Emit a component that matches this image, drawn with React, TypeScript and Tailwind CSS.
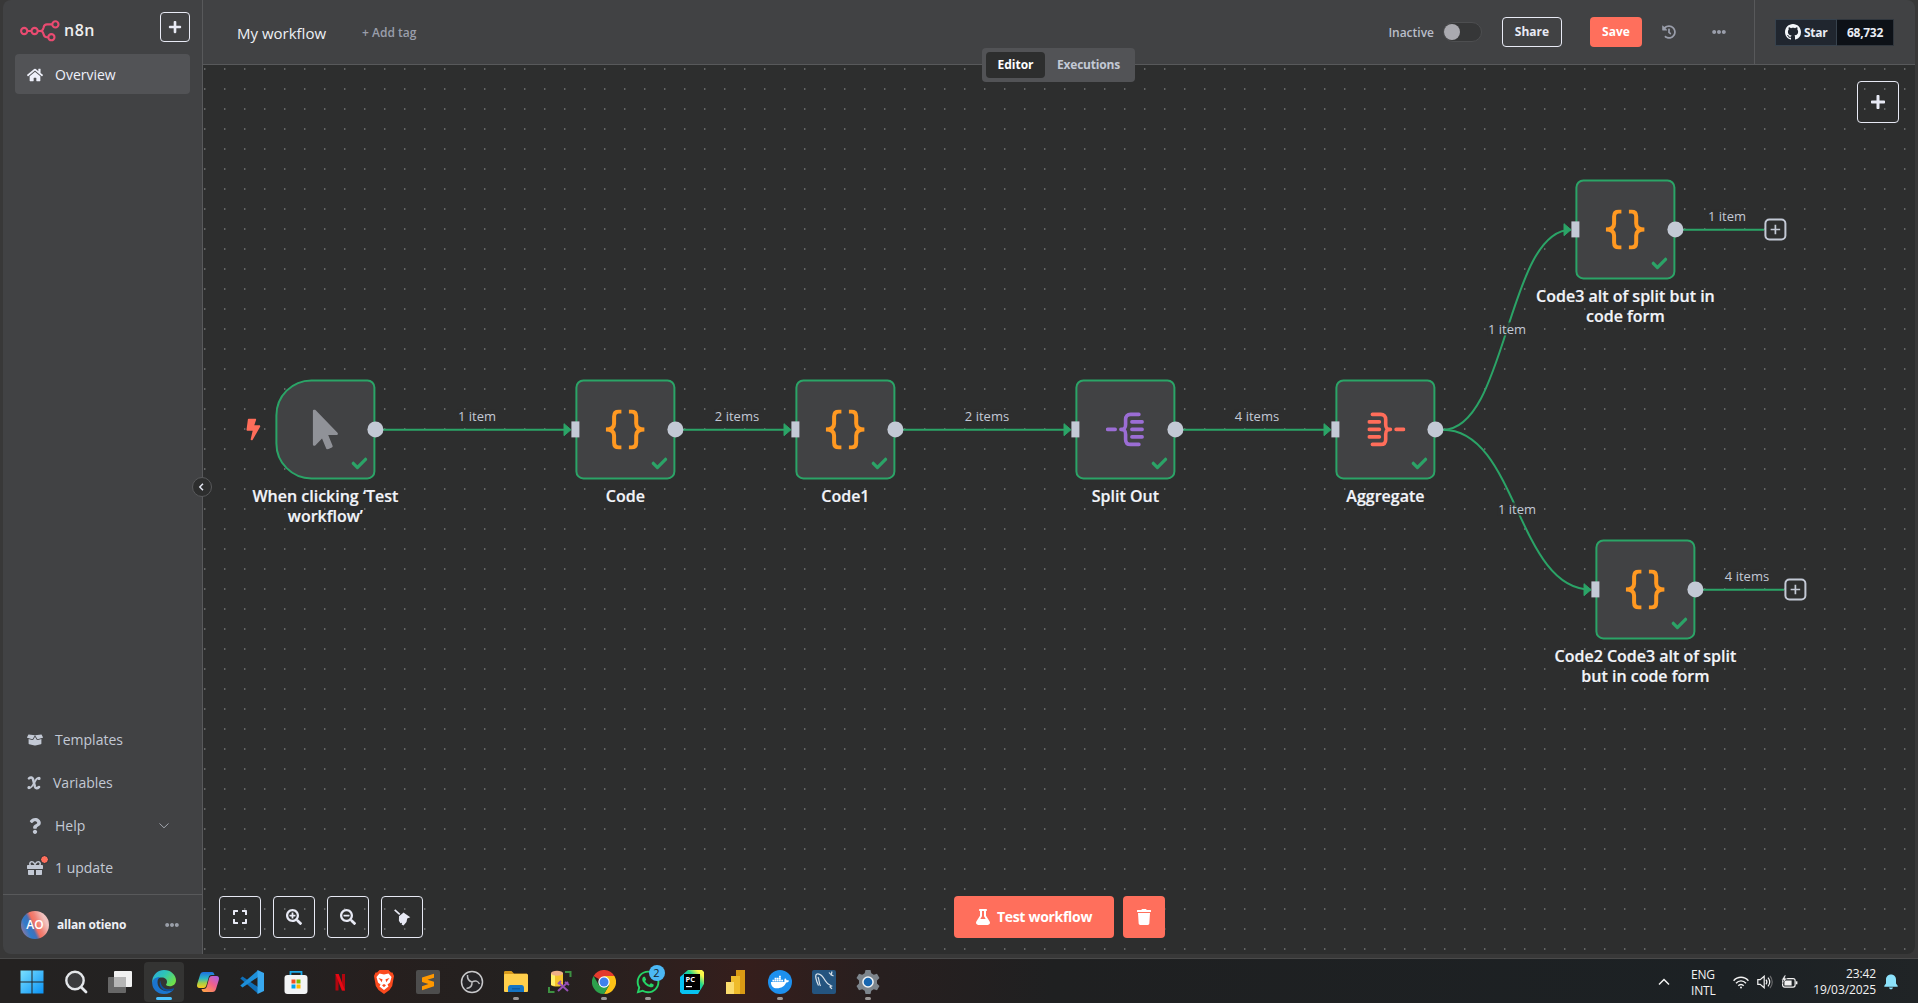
import React from "react";
import {
  FaHome, FaBoxOpen, FaQuestion, FaGift, FaEllipsisH, FaHistory, FaPlus, FaExpand, FaSearchPlus,
  FaSearchMinus, FaFlask, FaTrash, FaCheck, FaMousePointer, FaBolt, FaDocker, FaWhatsapp,
} from "react-icons/fa";

const GREEN = "#2ba467";

function Logo() {
  return (
    <svg width="40" height="22" viewBox="0 0 40 22" fill="none" stroke="#ea4b71" strokeWidth="2.1">
      <circle cx="4.2" cy="11" r="3.1" />
      <circle cx="14.6" cy="11" r="3.1" />
      <circle cx="35.4" cy="4.4" r="3.1" />
      <circle cx="31.4" cy="17.2" r="3.1" />
      <path d="M7.3 11h4.2M17.7 11h2.6c2.6 0 2.8-1.6 3.2-3.3.4-2 1.3-3.3 3.5-3.3h5.3M20.3 11c2.4 0 2.9 1.2 3.2 3 .4 2.2 1.4 3.2 3.4 3.2h1.4" />
    </svg>
  );
}

function VariableIcon() {
  return (
    <svg width="14" height="14" viewBox="0 0 14 14" fill="none" stroke="#c3c9d5" strokeLinecap="round">
      <path d="M2 2.4C3.600 .9 5.400 1.200 6 3.200L7.900 10.600c.6 2 2.500 2 4.100.4" strokeWidth="2.500" />
      <path d="M12 2.300C10 1.200 8.900 3.600 7.300 6.700 5.400 10.400 4 12.600 2 11.700" strokeWidth="1.700" />
      <circle cx="12" cy="2.400" r="1" fill="#c3c9d5" strokeWidth="1.300" />
      <circle cx="2" cy="11.600" r="1" fill="#c3c9d5" strokeWidth="1.300" />
    </svg>
  );
}

function BroomIcon() {
  return (
    <svg width="17" height="17" viewBox="0 0 17 17" fill="#e8eaf5">
      <path d="M1.200.200 6.300 4.700 5.200 6.100.100 1.400Z" />
      <path d="M5 7.200 9.600 3.400 11.200 4.700 16.300 8.200 13.200 9.500 12.500 13 9.500 16.600 7.600 15.400 8 13.800 6.400 14.300 4.900 11.800Z" />
    </svg>
  );
}

function Braces() {
  return (
    <svg width="40" height="40" viewBox="0 0 40 40" fill="none" stroke="#ff9922" strokeWidth="4">
      <path d="M16 2h-2.500Q8.700 2 8.700 7v7q0 6-8.200 6 8.200 0 8.200 6v7q0 5 4.800 5H16" />
      <path d="M23.500 2H26q4.800 0 4.800 5v7q0 6 8.200 6-8.200 0-8.200 6v7q0 5-4.800 5h-2.500" />
    </svg>
  );
}

function SplitGlyph({ color, flip }: { color: string; flip?: boolean }) {
  return (
    <svg width="38" height="36" viewBox="0 0 38 36" fill="none" stroke={color} strokeWidth="3.600" strokeLinecap="round" className={flip ? "translate-x-[1px] -scale-x-100" : "-translate-x-[0.5px]"}>
      <path d="M1.700 18h7.600M15 18c4 0 4.700-2 4.700-5V8q0-5 5-5h8.300M15 18c4 0 4.700 2 4.700 5v5q0 5 5 5h8.300M26 10.500h10.300M26 18h10.300M26 25.500h10.300" />
    </svg>
  );
}

function NavItem({ icon, label, className = "", children }: { icon: React.ReactNode; label: string; className?: string; children?: React.ReactNode }) {
  return (
    <div className={"flex items-center rounded px-3 text-[14px] text-[#c3c9d5] " + className}>
      <span className="flex w-4 justify-center">{icon}</span>
      <span className="ml-3">{label}</span>
      {children}
    </div>
  );
}

function Sidebar() {
  return (
    <aside className="relative z-20 flex w-[200px] shrink-0 flex-col rounded-l-lg border-r border-[#58595b] bg-[#414244]">
      <div className="flex items-start pt-3 pr-3 pl-[17px]">
        <span className="mt-2"><Logo /></span>
        <span className="mt-[7px] ml-[4px] text-[16px] leading-[22px] font-semibold tracking-[0.5px] text-[#eeeeee]">n8n</span>
        <span className="ml-auto flex size-[30px] items-center justify-center rounded border border-[#e8eaf5] text-[#e8eaf5]"><FaPlus size={14} /></span>
      </div>
      <NavItem icon={<FaHome size={16} color="#eef0fa" />} label="Overview" className="mt-3 mr-3 ml-3 h-10 bg-[#525356] pt-px text-[#eef0fa]" />
      <div className="mt-auto flex flex-col pr-3 pl-3">
        <NavItem icon={<FaBoxOpen size={16} />} label="Templates" className="h-[43px]" />
        <div className="flex h-[43px] items-center px-3 text-[14px] text-[#c3c9d5]"><VariableIcon /><span className="ml-3">Variables</span></div>
        <NavItem icon={<FaQuestion size={16} />} label="Help" className="h-[43px]">
          <svg className="mr-[9px] ml-auto" width="10" height="6" viewBox="0 0 10 6" fill="none" stroke="#a0a4ad"><path d="M.5.5 5 4.800 9.500.5" /></svg>
        </NavItem>
        <NavItem
          icon={<span className="relative"><FaGift size={16} /><i className="absolute -top-[4px] -right-[5px] size-[7px] rounded-full bg-[#ff6f5c] outline outline-[#35363a]" /></span>}
          label="1 update" className="h-[41px]" />
      </div>
      <div className="mt-[6px] flex h-[60px] items-center border-t border-[#58595b] pl-[18px]">
        <span className="flex size-7 items-center justify-center rounded-full bg-[linear-gradient(65deg,#b57791_3%,#2f7bca_28%,#4271b8_40%,#f5715f_50%,#f08378_60%,#f2c3c0_80%)] text-[12px] font-semibold text-white">AO</span>
        <span className="ml-2 pt-px text-[12px] font-bold tracking-[-0.2px] text-[#eef0f5]">allan otieno</span>
        <FaEllipsisH size={14} color="#9a9fa9" className="mr-[23px] ml-auto" />
      </div>
      <div className="absolute top-[477px] -right-[10px] flex size-5 items-center justify-center rounded-full border border-[#58595b] bg-[#2d2e2e]">
        <svg width="6" height="8" viewBox="0 0 6 8" fill="none" stroke="#e0e3ee" strokeWidth="1.500" className="-translate-x-[0.5px]"><path d="M4.500.7 1.300 4l3.200 3.300" /></svg>
      </div>
    </aside>
  );
}

function Header() {
  return (
    <header className="relative z-10 flex h-[65px] shrink-0 items-center rounded-tr-lg border-b border-[#58595b] bg-[#414244]">
      <span className="ml-[34px] pt-px text-[15px] font-medium text-[#eef0f5]">My workflow</span>
      <span className="ml-9 pt-0.5 text-[12px] font-semibold text-[#9a9eab]">+ Add tag</span>
      <div className="absolute top-12 left-[779px] flex h-[34px] w-[153px] rounded bg-[#525356] p-1 text-[12px] font-bold text-[#c3c9d5]">
        <span className="flex h-[26px] w-[59px] items-center justify-center rounded bg-[#2d2e2e] text-white">Editor</span>
        <span className="flex flex-1 items-center pl-3 tracking-[-0.2px]">Executions</span>
      </div>
      <span className="ml-auto pt-0.5 text-[12px] font-semibold text-[#b9bdc9]">Inactive</span>
      <span className="ml-[9px] flex h-5 w-[39px] items-center rounded-full border border-[#4d4e50] bg-[#363738]"><i className="size-4 rounded-full bg-[#aaaab0]" /></span>
      <span className="ml-[20px] flex h-[30px] w-[60px] items-center justify-center rounded border border-[#e8eaf5] text-[12px] font-bold text-[#e8eaf5]">Share</span>
      <span className="ml-[28px] flex h-[30px] w-[52px] items-center justify-center rounded bg-[#ff6f5c] text-[12px] font-bold text-white">Save</span>
      <FaHistory size={14} color="#9a9eab" className="ml-5" />
      <FaEllipsisH size={14} color="#9a9eab" className="ml-9" />
      <div className="ml-7 flex h-full w-[161px] items-center border-l border-[#58595b] pl-[20px] text-[12px] font-semibold text-[#e9edf5]">
        <span className="flex h-[27px] w-[62px] items-center border border-[#37424d] bg-[#20262f] pl-[9px]">
          <svg width="16" height="16" viewBox="0 0 16 16" fill="#f4f7fa"><path d="M8 0C3.580 0 0 3.580 0 8c0 3.540 2.290 6.530 5.470 7.590.4.070.55-.17.55-.38 0-.19-.01-.82-.01-1.490-2.010.37-2.530-.49-2.690-.94-.09-.23-.48-.94-.82-1.130-.28-.15-.68-.52-.01-.53.63-.01 1.080.58 1.230.82.72 1.210 1.870.87 2.330.66.070-.52.28-.87.51-1.070-1.780-.2-3.640-.89-3.640-3.950 0-.87.31-1.590.82-2.150-.08-.2-.36-1.020.08-2.120 0 0 .67-.21 2.200.82.64-.18 1.320-.27 2-.27s1.360.09 2 .27c1.530-1.040 2.200-.82 2.200-.82.44 1.100.16 1.920.08 2.120.51.56.82 1.270.82 2.150 0 3.070-1.870 3.750-3.650 3.950.29.25.54.73.54 1.480 0 1.070-.01 1.930-.01 2.200 0 .21.15.46.55.38A8.010 8.010 0 0 0 16 8c0-4.420-3.580-8-8-8Z" /></svg>
          <span className="ml-[3px] pt-px font-bold tracking-[-0.3px]">Star</span>
        </span>
        <span className="flex h-[27px] w-[57px] items-center justify-center border border-l-0 border-[#30363d] bg-[#0d1117] pt-px font-bold tracking-[-0.3px]">68,732</span>
      </div>
    </header>
  );
}

type NodeKind = "trigger" | "code" | "split" | "aggregate";

const nodes: { x: number; y: number; kind: NodeKind; label: string }[] = [
  { x: 72, y: 314, kind: "trigger", label: "When clicking ‘Test workflow’" },
  { x: 372, y: 314, kind: "code", label: "Code" },
  { x: 592, y: 314, kind: "code", label: "Code1" },
  { x: 872, y: 314, kind: "split", label: "Split Out" },
  { x: 1132, y: 314, kind: "aggregate", label: "Aggregate" },
  { x: 1372, y: 114, kind: "code", label: "Code3 alt of split but in code form" },
  { x: 1392, y: 474, kind: "code", label: "Code2 Code3 alt of split but in code form" },
];

const edges = [
  { d: "M180 364.700H362", tip: [368, 364.7] },
  { d: "M480 364.700H582", tip: [588, 364.7] },
  { d: "M700 364.700H862", tip: [868, 364.7] },
  { d: "M980 364.700H1122", tip: [1128, 364.7] },
  { d: "M1240 364.700C1304 364.700 1304 164.700 1368 164.700", tip: [1368, 164.7] },
  { d: "M1240 364.700C1314 364.700 1314 524.700 1388 524.700", tip: [1388, 524.7] },
  { d: "M1480 164.700H1561" },
  { d: "M1500 524.700H1581" },
];

const edgeLabels = [
  { x: 274, y: 351, text: "1 item" },
  { x: 534, y: 351, text: "2 items" },
  { x: 784, y: 351, text: "2 items" },
  { x: 1054, y: 351, text: "4 items" },
  { x: 1304, y: 264, text: "1 item" },
  { x: 1314, y: 444, text: "1 item" },
  { x: 1524, y: 151, text: "1 item" },
  { x: 1544, y: 511, text: "4 items" },
];

function NodeIcon({ kind }: { kind: NodeKind }) {
  if (kind === "trigger") return <FaMousePointer size={40} color="#909298" />;
  if (kind === "split") return <SplitGlyph color="#9b6dd5" />;
  if (kind === "aggregate") return <SplitGlyph color="#ff6d5a" flip />;
  return <Braces />;
}

function CanvasNode({ x, y, kind, label }: (typeof nodes)[number]) {
  const trigger = kind === "trigger";
  return (
    <div className="absolute size-[100px] translate-x-[0.4px] translate-y-[0.4px]" style={{ left: x, top: y }}>
      <div className={"flex size-full items-center justify-center border-2 border-[#2ba467] bg-[#414244] " + (trigger ? "rounded-[36px_8px_8px_36px]" : "rounded-lg")}>
        <NodeIcon kind={kind} />
      </div>
      <FaCheck size={16} color={GREEN} className="absolute right-2 bottom-2" />
      {trigger
        ? <FaBolt size={22} color="#ff6d5a" className="absolute top-[39px] -left-[33px]" />
        : <i className="absolute top-[42px] -left-1 h-4 w-2 bg-[#c3c9d5]" />}
      <i className="absolute top-[42px] -right-2 size-4 rounded-full bg-[#c3c9d5]" />
      <div className="absolute top-[107px] left-1/2 w-[190px] -translate-x-1/2 px-1 text-center text-[16px] leading-5 font-semibold text-[#f2f4f9] [-webkit-text-stroke:0.2px_#f2f4f9]">{label}</div>
    </div>
  );
}

function ToolButton({ children }: { children: React.ReactNode }) {
  return <span className="flex size-[42px] items-center justify-center rounded border border-[#e8eaf5] text-[#e8eaf5]">{children}</span>;
}

function Canvas() {
  return (
    <main className="relative flex-1 overflow-hidden rounded-br-lg bg-[#2d2e2e]">
      <svg className="absolute inset-0 size-full" fill="none">
        <defs>
          <pattern id="dots" width="20" height="20" patternUnits="userSpaceOnUse">
            <rect x="1" y="3" width="1.400" height="2" fill="#646566" />
          </pattern>
        </defs>
        <rect width="100%" height="100%" fill="url(#dots)" />
        {edges.map((e) => (
          <g key={e.d}>
            <path d={e.d} stroke={GREEN} strokeWidth="2" />
            {e.tip && <path d={`M${e.tip[0]} ${e.tip[1]}l-7-6v12z`} fill={GREEN} stroke={GREEN} strokeLinejoin="round" />}
          </g>
        ))}
      </svg>
      {edgeLabels.map((l) => (
        <span key={l.x} className="absolute -translate-x-1/2 -translate-y-1/2 bg-[#2d2e2e]/80 text-[13px] leading-[13px] whitespace-nowrap text-[#c3c9d5]" style={{ left: l.x, top: l.y }}>{l.text}</span>
      ))}
      {nodes.map((n) => <CanvasNode key={n.label} {...n} />)}
      {[[1561, 153], [1581, 513]].map(([x, y]) => (
        <span key={x} className="absolute flex size-[22px] translate-x-[0.4px] translate-y-[0.5px] items-center justify-center rounded-[5px] border-2 border-[#c3c9d5] bg-[#2d2e2e]" style={{ left: x, top: y }}>
          <svg width="10" height="10" viewBox="0 0 10 10" stroke="#c3c9d5" strokeWidth="1.700"><path d="M5 0v10M0 5h10" /></svg>
        </span>
      ))}
      <div className="absolute top-4 right-4"><ToolButton><FaPlus size={16} /></ToolButton></div>
      <div className="absolute bottom-4 left-4 flex gap-3">
        <ToolButton><FaExpand size={16} /></ToolButton>
        <ToolButton><FaSearchPlus size={16} /></ToolButton>
        <ToolButton><FaSearchMinus size={16} /></ToolButton>
        <ToolButton><BroomIcon /></ToolButton>
      </div>
      <div className="absolute bottom-4 left-[750.5px] flex gap-[9px] text-white">
        <span className="flex h-[42px] w-[160px] items-center justify-center gap-1.5 rounded bg-[#ff6f5c] text-[14px] font-bold tracking-[-0.3px]"><FaFlask size={16} />Test workflow</span>
        <span className="flex h-[42px] w-[42px] items-center justify-center rounded bg-[#ff6f5c]"><FaTrash size={16} /></span>
      </div>
    </main>
  );
}

function Icon({ children }: { children: React.ReactNode }) {
  return <svg width="24" height="24" viewBox="0 0 24 24" fill="none">{children}</svg>;
}

const taskbar: { name: string; icon: React.ReactNode; active?: boolean; running?: boolean; badge?: string }[] = [
  { name: "start", icon: <Icon><defs><linearGradient id="win" x1="0" y1="0" x2="1" y2="1"><stop stopColor="#7be0ff" /><stop offset="1" stopColor="#0a93f5" /></linearGradient></defs><path fill="url(#win)" d="M.5.500h11v11H.500zM12.500.500h11v11h-11zM.500 12.500h11v11H.500zM12.500 12.500h11v11h-11z" /></Icon> },
  { name: "search", icon: <Icon><circle cx="11" cy="10.500" r="8.700" fill="#3b3c3e" stroke="#e4e7ea" strokeWidth="2.400" /><path d="m17.500 17.500 4.500 4.500" stroke="#e4e7ea" strokeWidth="2.800" strokeLinecap="round" /></Icon> },
  { name: "tasks", icon: <Icon><rect x="6" y="1" width="18" height="16" rx="1" fill="#f1f1f1" /><rect x="0" y="7" width="18" height="16" rx="1" fill="#6c6c6c" fillOpacity=".95" /><path d="M6 7h12v10H6z" fill="#b5b5b5" /></Icon> },
  { name: "edge", active: true, icon: <Icon><defs><linearGradient id="e1" x1="0" y1="0" x2="1" y2=".6"><stop stopColor="#2aa8e0" /><stop offset=".5" stopColor="#2fc5b5" /><stop offset="1" stopColor="#6fe04a" /></linearGradient></defs><path fill="url(#e1)" d="M.3 10C1.500 4 6.200 0 12 0c7 0 12 5 12 10.300 0 3.700-2.900 6-6.100 6-2.600 0-3.900-.9-3.900-1.700 0-.7 1-1 1-2.900 0-2.300-2.200-4.200-5-4.200C5.500 7.500 1 9.500.3 14z" /><path fill="#1b75cf" d="M.2 13C.2 9 4.200 6.700 8.300 6.900c-1.800 1-2.800 2.800-2.800 5.300 0 5.500 4.500 9 9.500 9 2.700 0 5-.7 6.800-1.700C20 22 16.300 24 12 24 5 24 .2 19 .2 13z" /><path fill="#0d4f9f" d="M8.300 10.500c-2 4.500 1 9.800 6.500 10.500 3.200.3 6.400-1 7-1.600.5-.6 0-1.400-.8-1-6.600 2.300-12-.3-12.700-7.900z" /></Icon> },
  { name: "copilot", icon: <Icon><defs><linearGradient id="c1" x1="0" y1="0" x2="0" y2="1"><stop stopColor="#1d6fe0" /><stop offset=".4" stopColor="#2cb5c4" /><stop offset=".7" stopColor="#a7cf45" /><stop offset="1" stopColor="#ffc81f" /></linearGradient><linearGradient id="c2" x1="1" y1="0" x2=".2" y2="1"><stop stopColor="#a560ee" /><stop offset=".5" stopColor="#f0608b" /><stop offset="1" stopColor="#ff9f4a" /></linearGradient></defs><path fill="url(#c1)" d="M7.500 2H16c1.500 0 2 1 2.500 3h-3c-2 0-2.500 1-3 3l-2 7c-.5 2-1.500 3-3 3H3.500c-2 0-3-1.500-2.300-4L4 5c.6-2 1.500-3 3.500-3z" /><path fill="url(#c2)" d="M16.500 22H8c-1.500 0-2-1-2.500-3h2c2 0 3-1 3.500-3l2-7.500c.5-1.700 1.500-2.500 3-2.500h4.500c2 0 3 1.500 2.300 4L20 19c-.6 2-1.500 3-3.500 3z" /></Icon> },
  { name: "vscode", icon: <Icon><path fill="#0f6fb8" d="m2.500 6.600-2.200 2L18 23.700V17z" /><path fill="#1d8fd9" d="m2.500 17.400-2.200-2L18 .3V7z" /><path fill="#38a8ef" d="M17.500 0 24 3v18l-6.500 3z" /></Icon> },
  { name: "store", icon: <Icon><path d="M6.500 7V1.800h11V7" stroke="#1ba8e8" strokeWidth="1.800" /><rect x=".5" y="5" width="23" height="19" rx="3" fill="#f3f4f5" /><path fill="#f25022" d="M7.500 9.500H11.500v4h-4z" /><path fill="#7fba00" d="M12.500 9.500h4v4h-4z" /><path fill="#00a4ef" d="M7.500 14.500h4v4h-4z" /><path fill="#ffb900" d="M12.500 14.500h4v4h-4z" /></Icon> },
  { name: "netflix", icon: <Icon><path fill="#b1060f" d="M7.500 4h3v16.500h-3zM14 4h3v16.500h-3z" /><path fill="#e50914" d="M7.500 4h3.200L17 20.500h-3.200z" /></Icon> },
  { name: "brave", icon: <Icon><path fill="#fb4a1e" d="M7.500 0h9L19 2.500h1.500L22 6l-1.800 10-2.700 4L12 24l-5.500-4-2.700-4L2 6l1.500-3.500H5z" /><path fill="#fff" d="m7.500 3.500 4.500 1 4.500-1L19.500 7 18 12.500l-2.500 2 1 2L12 20l-4.500-3.500 1-2-2.500-2L4.500 7z" /><path fill="#fb4a1e" d="m6.500 8 4 1.200-.7 3zM17.500 8l-4 1.200.7 3zM12 14l2 1.200-2 2-2-2z" /></Icon> },
  { name: "sublime", icon: <Icon><rect width="24" height="24" rx="2" fill="#4d4d4d" /><path fill="#ff9800" d="m6 7.500 12-3.800v4L11.500 9.800 18 11.800v4.500L6 20.200v-4l6.500-2.100L6 12z" /></Icon> },
  { name: "obs", icon: <Icon><circle cx="12" cy="12" r="10.500" fill="#252427" stroke="#c9c9cb" strokeWidth="1.500" /><path d="M7.500 5c-.3 3.500 1 6 4.500 7 3.500-2 6-1 7.500 2M12 12c.3 3.800-1.500 6-5.500 6.500M4.500 12" stroke="#bcbcbe" strokeWidth="1.500" /></Icon> },
  { name: "explorer", running: true, icon: <Icon><path fill="#d79a1c" d="M0 2.500C0 1.500.5 1 1.500 1h6L10 3.500h13V9H0z" /><rect y="4" width="24" height="18" rx="1" fill="#ffcf4b" /><path fill="#1474c4" d="M4 22v-4c0-2 1-3 2.500-3h11c1.500 0 2.500 1 2.500 3v4z" /><path fill="#0d5aa0" d="M8 18h8v1.500H8z" /></Icon> },
  { name: "database", icon: <Icon><path fill="#f5c32c" d="M3 3h12v12c-2 2-10 2-12 0z" /><path fill="#fff06a" d="M3 4h4v12L3 15z" /><ellipse cx="9" cy="3.200" rx="6" ry="2.500" fill="#f0b088" /><path d="M17 2h5.500v5M1 17v5h5.500" stroke="#3d9142" strokeWidth="2" /><path d="m10 21 10-9M11 13l9 8M17 12l4 3M10 14l3-3" stroke="#9650b5" strokeWidth="2" /></Icon> },
  { name: "chrome", running: true, icon: <Icon><path fill="#e33b2e" d="M12 12 1.600 6A12 12 0 0 1 22.400 6z" /><path fill="#fbc116" d="M12 6h10.400A12 12 0 0 1 12 24l5.200-9z" /><path fill="#2da14c" d="M1.600 6A12 12 0 0 0 12 24l5.200-9L12 12 6.800 15z" /><circle cx="12" cy="12" r="5.700" fill="#fff" /><circle cx="12" cy="12" r="4.500" fill="#4081ec" /></Icon> },
  { name: "whatsapp", running: true, badge: "2", icon: <FaWhatsapp size={26} color="#25d366" /> },
  { name: "pycharm", icon: <Icon><defs><linearGradient id="pc" x1="0" y1="1" x2="1" y2="0"><stop offset=".4" stopColor="#07c3f2" /><stop offset=".65" stopColor="#21d789" /><stop offset=".85" stopColor="#fcf84a" /></linearGradient></defs><path fill="url(#pc)" d="M0 7 8 0h14l2 2v12L18 24H2l-2-2z" /><path fill="#000" d="M4 4h16v16H4z" /><text x="5.500" y="12" fill="#fff" fontSize="7.500" fontWeight="700" fontFamily="Open Sans, sans-serif">PC</text><path fill="#fff" d="M6 16h6v1.200H6z" /></Icon> },
  { name: "powerbi", icon: <Icon><path fill="#d99a14" d="M12 0h9v24h-9z" /><path fill="#eebb2b" d="M7 6h9v18H7z" /><path fill="#fbdc6d" d="M2 12h8v12H2z" /></Icon> },
  { name: "docker", running: true, icon: <span className="flex size-6 items-center justify-center rounded-full bg-[#1d90ee] text-white"><FaDocker size={18} /></span> },
  { name: "mysql", icon: <Icon><rect width="24" height="24" rx="2" fill="#24547f" /><path d="M6.500 15.500C4 10 2.500 5 5 4c3-.8 6 2.500 8.500 7 1.500 3 3.500 4 6 5l-1.500.8 2 2M6 7c1.500 3 .8 6 2.500 9M17 2.500c1 1.500 2.500 2.500 4.500 3.500M20 1.500l-1 4" stroke="#d9e2ea" strokeWidth="1.200" /></Icon> },
  { name: "settings", running: true, icon: <Icon><path fill="#7d858c" d="m9.500 0h5l.8 3.300 2.500 1.400 3.200-1 2.500 4.200L21 10.500v3l2.500 2.600-2.500 4.200-3.200-1-2.500 1.400-.8 3.300h-5l-.8-3.300-2.500-1.400-3.200 1-2.500-4.200L3 13.500v-3L.500 7.900 3 3.700l3.200 1 2.500-1.400z" /><circle cx="12" cy="12" r="5.800" fill="#f1f4f6" /><circle cx="12" cy="12" r="4.300" fill="#1766b0" /></Icon> },
];

function Taskbar() {
  return (
    <footer className="flex h-11 items-center bg-[linear-gradient(90deg,#242221_0%,#232222_12%,#261f1e_20%,#232120_28%,#351e1c_39%,#271f1f_46%,#1f2021_55%,#1c2124_90%,#202426_100%)] pt-0.5 pl-[9.5px] text-[12px] text-[#f2f2f2]">
      {taskbar.map((t) => (
        <div key={t.name} className="flex w-11 items-center justify-center">
          <div className={"relative flex h-10 w-10 items-center justify-center rounded " + (t.active ? "bg-[#343433]" : "")}>
            {t.icon}
            {t.active && <i className="absolute bottom-0.5 h-[3px] w-4 rounded-full bg-[#4cc2ff]" />}
            {t.running && <i className="absolute bottom-0.5 h-[3px] w-1.5 rounded-full bg-[#9b9796]" />}
            {t.badge && <span className="absolute top-[3px] left-[21px] flex size-4 items-center justify-center rounded-full bg-[#4cb8f5] text-[11px] leading-4 text-[#14212b]">{t.badge}</span>}
          </div>
        </div>
      ))}
      <svg className="ml-auto" width="12" height="8" viewBox="0 0 12 8" fill="none" stroke="#f2f2f2" strokeWidth="1.500"><path d="m1 6.500 5-5 5 5" /></svg>
      <div className="ml-[21px] w-[28px] pt-px text-[12px] leading-4 tracking-[-0.2px]"><div>ENG</div><div>INTL</div></div>
      <svg className="ml-[14px]" width="16" height="13" viewBox="0 0 16 13" fill="none" stroke="#f2f2f2" strokeWidth="1.400"><path d="M.6 4.800c4-4.700 10.800-4.700 14.800 0M3 7.300c2.800-3.200 7.200-3.200 10 0M5.300 9.700c1.500-1.700 3.900-1.700 5.400 0" /><circle cx="8" cy="11.400" r="1" fill="#f2f2f2" stroke="none" /></svg>
      <svg className="ml-[8px]" width="16" height="14" viewBox="0 0 16 14" fill="none" stroke="#f2f2f2" strokeWidth="1.200"><path d="M.8 4.700v4.600h2.400l4 3.500V1.200l-4 3.500z" /><path d="M9 4.700c1 1.300 1 3.300 0 4.600M11 2.700c2 2.500 2 6.100 0 8.600" /><path d="M13 1c3 3.500 3 8.500 0 12" stroke="#68696b" /></svg>
      <svg className="ml-[8px]" width="17" height="14" viewBox="0 0 17 14" fill="none" stroke="#f2f2f2" strokeWidth="1.200"><rect x="1.600" y="3.600" width="12.500" height="8.500" rx="2" /><path d="M15.600 6.300v3" strokeWidth="1.600" /><path d="M4 6h6v4H4z" fill="#f2f2f2" /><path d="M3.700 0 .500 5h2l-.7 3.500L6 3.300H3.900L5 0z" fill="#f2f2f2" stroke="#1c2124" strokeWidth=".5" /></svg>
      <div className="ml-[13px] w-[65px] text-right text-[12px] leading-4 tracking-[-0.1px] whitespace-nowrap"><div>23:42</div><div>19/03/2025</div></div>
      <svg className="mr-[20px] ml-[8px]" width="14" height="16" viewBox="0 0 14 16" fill="#8ce2fb"><path d="M7 .5c3 0 5 2.200 5 5v4l1.700 2.300v.9H.3v-.9L2 9.500v-4c0-2.800 2-5 5-5zM5 13.500h4c-.4 1.300-1 1.800-2 1.800s-1.600-.5-2-1.800z" /></svg>
    </footer>
  );
}

export default function App() {
  return (
    <div className="flex h-[1003px] w-[1918px] flex-col overflow-hidden bg-[#383838] font-['Open_Sans','Noto_Sans',sans-serif] leading-5">
      <div className="flex h-[954px] pr-[3px] pl-[3px]">
        <Sidebar />
        <div className="flex min-w-0 flex-1 flex-col">
          <Header />
          <Canvas />
        </div>
      </div>
      <div className="h-[5px] border-b border-[#4a4a4a] bg-[#383838]" />
      <Taskbar />
    </div>
  );
}
